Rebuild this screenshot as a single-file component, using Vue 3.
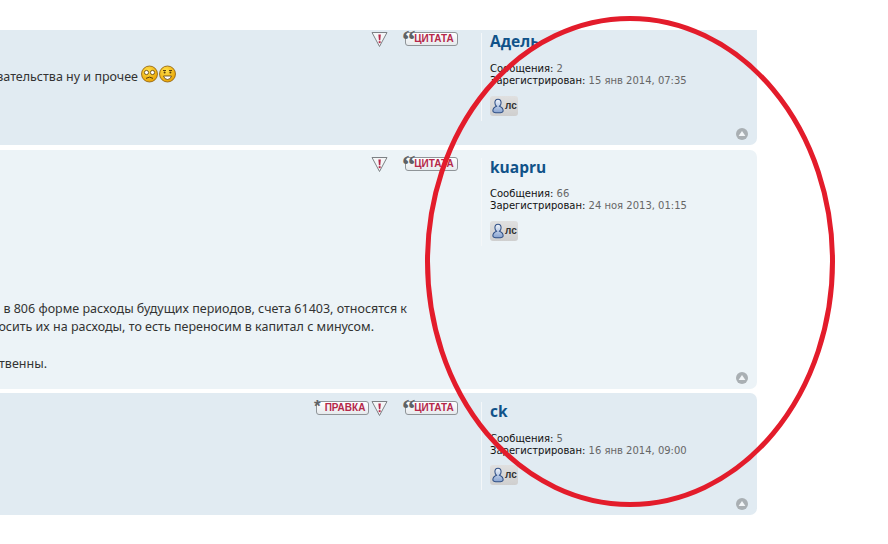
<script setup>
const posts = [
  {
    id: 1, cls: 'first', name: 'Адель', msgs: '2', reg: '15 янв 2014, 07:35', edit: false,
    lines: [{ cls: 'l1a', text: 'обязательства ну и прочее', smile: true }],
  },
  {
    id: 2, cls: 'second', name: 'kuapru', msgs: '66', reg: '24 ноя 2013, 01:15', edit: false,
    lines: [
      { cls: 'l2a', text: 'в 806 форме расходы будущих периодов, счета 61403, относятся к' },
      { cls: 'l2b', text: 'относить их на расходы, то есть переносим в капитал с минусом.' },
      { cls: 'l2c', text: '\u00a0' },
      { cls: 'l2d', text: 'существенны.' },
    ],
  },
  {
    id: 3, cls: 'third', name: 'ck', msgs: '5', reg: '16 янв 2014, 09:00', edit: true, lines: [],
  },
]
</script>

<template>
  <div class="page">
    <div class="posts">
      <article v-for="p in posts" :key="p.id" class="post" :class="p.cls">
        <div class="cols">
          <div class="main">
            <div class="controls">
              <span v-if="p.edit" class="btn edit"><i class="mark star">*</i><b>ПРАВКА</b></span>
              <svg class="report" width="17" height="17" viewBox="0 0 17 17">
                <path d="M1 1.5H16L8.5 15.5Z" fill="#f4f6f7" stroke="#7d8185" stroke-width="1" stroke-linejoin="round" />
                <path d="M7.4 3.5H9.8L9.3 9.2H7.9Z" fill="#b5284a" />
                <rect x="7.7" y="10.2" width="1.9" height="1.9" fill="#b5284a" />
              </svg>
              <span class="btn quote"><i class="mark">“</i><b>ЦИТАТА</b></span>
            </div>
            <div class="body">
              <div v-for="l in p.lines" :key="l.cls" class="line" :class="l.cls">
                <span>{{ l.text }}</span>
                <span v-if="l.smile" class="smiles">
                  <svg width="17" height="18" viewBox="0 0 17 18">
                    <defs>
                      <radialGradient id="sm1" cx="40%" cy="30%" r="75%">
                        <stop offset="0" stop-color="#ffe04a" />
                        <stop offset="1" stop-color="#e8a000" />
                      </radialGradient>
                    </defs>
                    <circle cx="8.5" cy="9" r="8" fill="url(#sm1)" stroke="#8a5d10" stroke-width=".8" />
                    <circle cx="5.5" cy="7.5" r="2.1" fill="#fff" stroke="#5a3d0a" stroke-width=".8" />
                    <circle cx="11.5" cy="7.5" r="2.1" fill="#fff" stroke="#5a3d0a" stroke-width=".8" />
                    <path d="M5 13.4Q8.5 10.8 12 13.4" fill="none" stroke="#5a3d0a" stroke-width="1" />
                  </svg>
                  <svg width="17" height="18" viewBox="0 0 17 18">
                    <circle cx="8.5" cy="9" r="8" fill="url(#sm1)" stroke="#8a5d10" stroke-width=".8" />
                    <path d="M4 5.5H7M10 5.5H13" stroke="#5a3d0a" stroke-width="1" />
                    <circle cx="5.6" cy="7.5" r="1" fill="#5a3d0a" />
                    <circle cx="11.4" cy="7.5" r="1" fill="#5a3d0a" />
                    <path d="M4.5 11H12.5Q11.5 14.5 8.5 14.5T4.5 11Z" fill="#fff" stroke="#5a3d0a" stroke-width=".8" />
                  </svg>
                </span>
              </div>
            </div>
          </div>
          <aside class="author">
            <h3 class="name">{{ p.name }}</h3>
            <div class="stats">
              <div><b>Сообщения:</b> <span>{{ p.msgs }}</span></div>
              <div><b>Зарегистрирован:</b> <span>{{ p.reg }}</span></div>
            </div>
            <span class="pm">
              <svg width="12" height="16" viewBox="0 0 14 18">
                <defs>
                  <linearGradient id="pmg" x1="0" y1="0" x2="0" y2="1">
                    <stop offset="0" stop-color="#f2f6fc" />
                    <stop offset="1" stop-color="#86a2d0" />
                  </linearGradient>
                </defs>
                <path d="M7 1C4.6 1 3.4 3 3.4 5.2C3.4 7 4.2 8.5 5.2 9.3C3 10.2 1 12.2 1 14.6C1 16.2 3.4 17 7 17S13 16.2 13 14.6C13 12.2 11 10.2 8.8 9.3C9.8 8.5 10.6 7 10.6 5.2C10.6 3 9.4 1 7 1Z" fill="url(#pmg)" stroke="#2f4f86" stroke-width="1.2" />
              </svg>
              <span>лс</span>
            </span>
          </aside>
        </div>
        <div class="foot">
          <span class="top">
            <svg width="12" height="12" viewBox="0 0 12 12">
              <circle cx="6" cy="6" r="6" fill="#a9afb3" />
              <path d="M6 3L9.4 8H2.6Z" fill="#f2f5f7" />
            </svg>
          </span>
        </div>
      </article>
    </div>
    <svg class="ring" width="888" height="544" viewBox="0 0 888 544">
      <ellipse cx="630" cy="261.5" rx="202.5" ry="243" fill="none" stroke="#e31c2b" stroke-width="5" />
    </svg>
  </div>
</template>

<style>
html, body { margin: 0; background: #fff; }
</style>

<style scoped>
.page {
  position: relative;
  width: 888px;
  height: 544px;
  overflow: hidden;
  background: #fff;
  padding-top: 30px;
  box-sizing: border-box;
}
.posts {
  width: 757px;
  display: flex;
  flex-direction: column;
  gap: 4px;
}
.post {
  display: flex;
  flex-direction: column;
  border-radius: 0 7px 7px 0;
  box-sizing: border-box;
  background: #e1ebf2;
  padding-top: 9px;
}
.first { height: 115px; padding-top: 3px; border-top-right-radius: 0; margin-bottom: 1px; }
.second { height: 239px; background: #ecf3f7; padding-top: 8px; }
.third { height: 122px; }
.cols {
  display: flex;
  flex: 1;
  min-height: 0;
}
.main {
  width: 481px;
  flex: none;
  box-sizing: border-box;
  padding-right: 23px;
}
.controls {
  display: flex;
  justify-content: flex-end;
  align-items: flex-start;
  height: 18px;
  margin-top: -2px;
}
.report { margin: 0 17px 0 2px; }
.btn {
  position: relative;
  display: block;
  width: 53px;
  height: 14px;
  margin-top: 1px;
  box-sizing: border-box;
  background: linear-gradient(#fff, #e6eaed);
  border: 1px solid #8f9498;
  border-radius: 3px;
  text-align: center;
  font: 700 10px/12px "Liberation Sans", Arial, sans-serif;
  color: #b5284a;
}
.btn b { font-weight: 700; padding-left: 5px; }
.mark {
  position: absolute;
  left: -4px;
  top: -5px;
  font: 700 27px/24px "Liberation Serif", serif;
  color: #5e6266;
  letter-spacing: 0;
}
.star { font: 700 17px/17px "Liberation Sans", sans-serif; top: -4px; left: -3px; }
.body {
  font: 12.5px/18px "Noto Sans", "Open Sans", sans-serif;
  color: #333;
}
.line {
  display: flex;
  justify-content: flex-end;
  align-items: center;
  white-space: nowrap;
  height: 18px;
}
.first .body { padding-top: 19px; }
.second .body { padding-top: 126px; }
.smiles { display: inline-flex; gap: 1px; margin-left: 3px; margin-top: -6px; }
.l1a { width: 176px; }
.l2a { width: 407px; }
.l2b { width: 374px; }
.l2c { width: 100px; }
.l2d { width: 47px; margin-top: 1px; }
.author {
  flex: 1;
  box-sizing: border-box;
  height: 88px;
  padding-left: 8px;
  border-left: 1px solid #f4f7f9;
  font: 10px/12px "DejaVu Sans", Verdana, sans-serif;
  color: #666;
}
.name {
  margin: -1px 0 0;
  font: 700 15.5px/20px "Open Sans", "Noto Sans", sans-serif;
  color: #105289;
}
.first .name { margin-top: -2px; }
.first .stats { margin-top: 12px; }
.stats { margin-top: 11px; }
.third .stats { margin-top: 12px; }
.third .pm { margin-top: 8px; }
.stats b { font-weight: 400; color: #111; }
.pm {
  display: inline-flex;
  align-items: center;
  gap: 1px;
  width: 28px;
  height: 20px;
  margin-top: 9px;
  padding-left: 2px;
  box-sizing: border-box;
  border-radius: 3px;
  background: linear-gradient(#e0e0e0, #cfcfcf);
  font: 700 10px/20px "Liberation Sans", sans-serif;
  color: #333;
}
.foot {
  display: flex;
  justify-content: flex-end;
  padding: 0 9px 7px 0;
}
.top { display: block; height: 12px; }
.ring {
  position: absolute;
  left: 0;
  top: 0;
  pointer-events: none;
}
</style>
